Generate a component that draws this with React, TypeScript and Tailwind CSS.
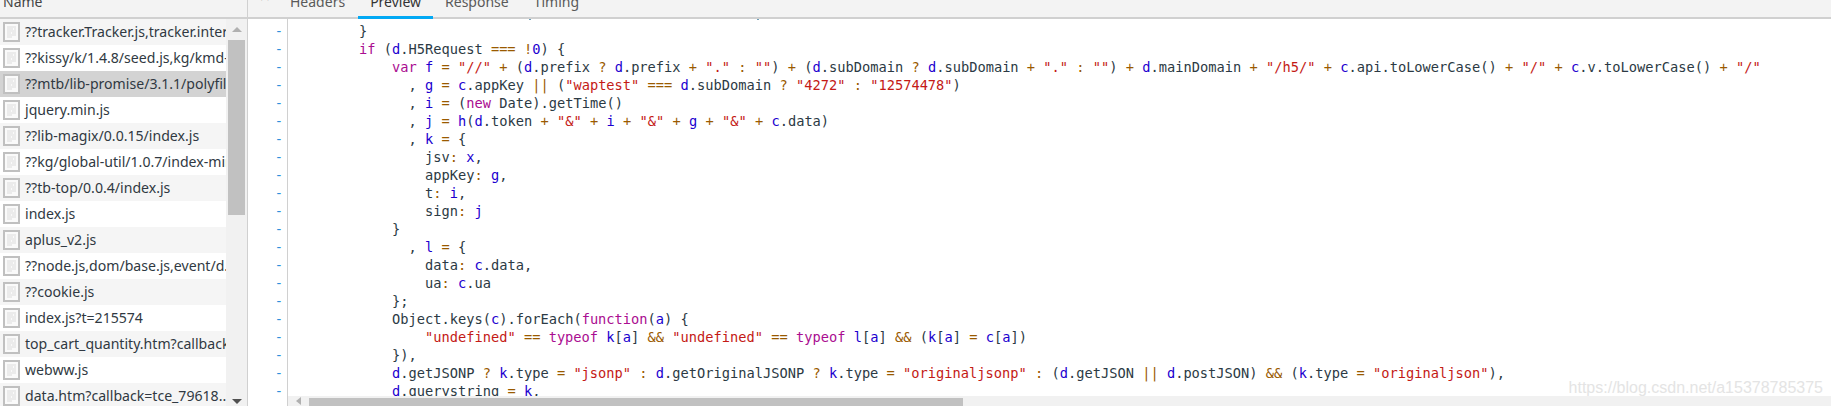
import React from 'react';

const files = [
  '??tracker.Tracker.js,tracker.interceptor.js',
  '??kissy/k/1.4.8/seed.js,kg/kmd-adapter.js',
  '??mtb/lib-promise/3.1.1/polyfill.js',
  'jquery.min.js',
  '??lib-magix/0.0.15/index.js',
  '??kg/global-util/1.0.7/index-min.js',
  '??tb-top/0.0.4/index.js',
  'index.js',
  'aplus_v2.js',
  '??node.js,dom/base.js,event/d...',
  '??cookie.js',
  'index.js?t=215574',
  'top_cart_quantity.htm?callback=jsonp',
  'webww.js',
  'data.htm?callback=tce_79618...',
];

const code = [
  '        }',
  '        if (d.H5Request === !0) {',
  '            var f = "//" + (d.prefix ? d.prefix + "." : "") + (d.subDomain ? d.subDomain + "." : "") + d.mainDomain + "/h5/" + c.api.toLowerCase() + "/" + c.v.toLowerCase() + "/"',
  '              , g = c.appKey || ("waptest" === d.subDomain ? "4272" : "12574478")',
  '              , i = (new Date).getTime()',
  '              , j = h(d.token + "&" + i + "&" + g + "&" + c.data)',
  '              , k = {',
  '                jsv: x,',
  '                appKey: g,',
  '                t: i,',
  '                sign: j',
  '            }',
  '              , l = {',
  '                data: c.data,',
  '                ua: c.ua',
  '            };',
  '            Object.keys(c).forEach(function(a) {',
  '                "undefined" == typeof k[a] && "undefined" == typeof l[a] && (k[a] = c[a])',
  '            }),',
  '            d.getJSONP ? k.type = "jsonp" : d.getOriginalJSONP ? k.type = "originaljsonp" : (d.getJSON || d.postJSON) && (k.type = "originaljson"),',
  '            d.querystring = k,',
];

const tokenRe = /("[^"]*")|\b(if|var|new|function|typeof)\b|(\.[A-Za-z0-9]+)|\b([A-Za-z][A-Za-z0-9]*)(?=:)|\b([a-z])\b|\b(0)\b|(===|==|&&|\|\||[=+?!:|&])|([^"]+?)/g;

const renderLine = (line: string) => {
  const out: React.ReactNode[] = [];
  let m: RegExpExecArray | null;
  let key = 0;
  tokenRe.lastIndex = 0;
  while ((m = tokenRe.exec(line))) {
    const t = m[0];
    let cls = 'text-[#2c3a44]';
    if (m[1]) cls = 'text-[#c41a16]';
    else if (m[2]) cls = 'text-[#aa0d91]';
    else if (m[5] || m[6]) cls = 'text-[#1c00cf]';
    else if (m[7]) cls = 'text-[#9a5a00]';
    out.push(<span key={key++} className={cls}>{t}</span>);
  }
  return out;
};

const FileIcon = () => (
  <svg width="17" height="20" viewBox="0 0 17 20" className="shrink-0">
    <rect x="1" y="1" width="15" height="18" fill="#fafafa" stroke="#c0c0c0" strokeWidth="2" />
    <path d="M4 5h9M4 7h6M11 7h2M4 9h9M4 11h4M9 11h4M4 13h9M4 15h5" stroke="#dcdcdc" strokeWidth="1" fill="none" />
  </svg>
);

export default function App() {
  return (
    <div className="relative flex h-[406px] w-[1831px] overflow-hidden bg-white font-['Noto_Sans',sans-serif] text-[#303942]">
      <div className="flex h-full w-[248px] shrink-0 flex-col border-r border-[#d0d0d0]">
        <div className="flex h-[19px] shrink-0 items-end overflow-hidden border-b-2 border-[#d0d0d0] bg-[#f3f3f3] pl-[3px]">
          <span className="mb-[3px] text-[14px] leading-[24px] text-[#444]">Name</span>
        </div>
        <div className="flex min-h-0 flex-1">
          <div className="w-[226px] shrink-0 overflow-hidden">
            {files.map((name, i) => (
              <div
                key={i}
                className={`flex h-[26px] items-center gap-[5px] pl-[3px] ${i === 2 ? 'bg-[#d3d3d3]' : i % 2 === 0 ? 'bg-[#f5f5f5]' : 'bg-white'}`}
              >
                <FileIcon />
                <span className="whitespace-nowrap text-[14.1px] leading-[26px]">{name}</span>
              </div>
            ))}
          </div>
          <div className="flex w-[21px] shrink-0 flex-col bg-[#f1f1f1] pr-[2px] pl-[2px]">
            <div className="flex h-[21px] items-center justify-center">
              <div className="h-0 w-0 border-x-[5px] border-b-[5px] border-x-transparent border-b-[#b0b0b0]" />
            </div>
            <div className="h-[175px] w-full bg-[#c1c1c1]" />
            <div className="flex-1" />
            <div className="flex h-[10px] items-center justify-center">
              <div className="h-0 w-0 border-x-[5px] border-t-[5px] border-x-transparent border-t-[#505050]" />
            </div>
          </div>
        </div>
      </div>

      <div className="flex min-w-0 flex-1 flex-col">
        <div className="flex h-[19px] shrink-0 items-end overflow-hidden border-b-2 border-[#d0d0d0] bg-[#f3f3f3] text-[14px] leading-[24px] text-[#5a5a5a]">
          <div className="mb-[9px] flex w-[30px] justify-center pl-[4px] font-bold text-[#777]">✕</div>
          <span className="mb-[3px] ml-[12px]">Headers</span>
          <span className="relative mb-[3px] ml-[25px] text-[#333]">
            Preview
          </span>
          <span className="mb-[3px] ml-[24px]">Response</span>
          <span className="mb-[3px] ml-[25px]">Timing</span>
        </div>
        <div className="flex min-h-0 flex-1">
          <div className="w-[40px] shrink-0 border-r border-[#d0d0d0] pt-[3px] pr-[4px] text-right font-['DejaVu_Sans_Mono',monospace] text-[13.7px] leading-[18px] text-[#2f8fdc]">
            {code.map((_, i) => (
              <div key={i} className="h-[18px]">-</div>
            ))}
          </div>
          <div className="flex min-w-0 flex-1 flex-col">
            <div className="min-h-0 flex-1 overflow-hidden pt-[3px] pl-[5px] font-['DejaVu_Sans_Mono',monospace] text-[13.7px] leading-[18px]">
              {code.map((line, i) => (
                <div key={i} className="h-[18px] whitespace-pre">{renderLine(line)}</div>
              ))}
            </div>
            <div className="flex h-[10px] shrink-0 items-end bg-[#f1f1f1]">
              <div className="mb-[1px] ml-[8px] h-0 w-0 border-y-[4px] border-r-[5px] border-y-transparent border-r-[#b0b0b0]" />
              <div className="ml-[8px] h-[8px] w-[654px] bg-[#c1c1c1]" />
            </div>
          </div>
        </div>
      </div>

      {/* active tab underline sits over the header border */}
      <div className="absolute left-[358px] top-[16px] h-[3px] w-[75px] bg-[#03a9f4]" />
      {/* descender bits of the scrolled off line */}
      <div className="absolute left-[529px] top-[19px] h-[1px] w-[2px] bg-[#6f9fb8]" />
      <div className="absolute left-[757px] top-[19px] h-[1px] w-[2px] bg-[#6f9fb8]" />

      <div className="absolute right-[8px] top-[377px] font-['Liberation_Sans',sans-serif] text-[16px] leading-[22px] text-[#e4e4e4]">
        https://blog.csdn.net/a15378785375
      </div>
    </div>
  );
}
